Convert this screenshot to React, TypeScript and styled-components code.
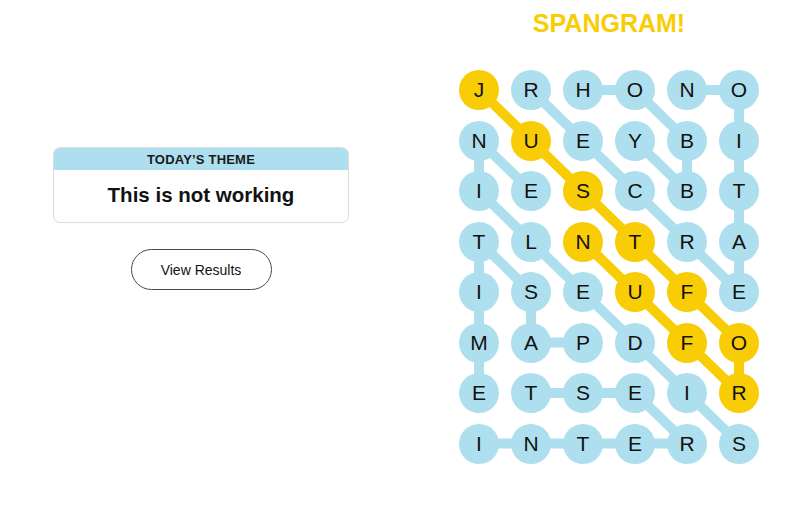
import React from 'react';
import styled, { createGlobalStyle } from 'styled-components';

const GlobalStyle = createGlobalStyle`
  body {
    margin: 0;
    background: #ffffff;
    font-family: "Liberation Sans", Arial, sans-serif;
    color: #121212;
  }
`;

const BLUE = '#aedfee';
const YELLOW = '#f8cd05';

const CELL = 40;
const COL_GAP = 12;
const ROW_GAP = 10.5;

const letters = ['JRHONO', 'NUEYBI', 'IESCBT', 'TLNTRA', 'ISEUFE', 'MAPDFO', 'ETSEIR', 'INTERS'];

type Pos = [number, number];

// words found, as paths of [row, col]
const foundWords: Pos[][] = [
  [[0, 2], [0, 3], [1, 4], [2, 4], [1, 3]],
  [[0, 1], [1, 2], [2, 3], [3, 4], [4, 5], [3, 5], [2, 5], [1, 5], [0, 5], [0, 4]],
  [[5, 2], [5, 1], [4, 1], [3, 0], [4, 0], [5, 0], [6, 0]],
  [[7, 5], [6, 4], [5, 3], [4, 2], [3, 1], [2, 0], [1, 0], [2, 1]],
  [[7, 0], [7, 1], [7, 2], [7, 3], [7, 4], [6, 3], [6, 2], [6, 1]],
];

const spangram: Pos[] = [[0, 0], [1, 1], [2, 2], [3, 3], [4, 4], [5, 5], [6, 5], [5, 4], [4, 3], [3, 2]];

const Page = styled.div`
  display: flex;
  width: 800px;
  height: 505px;
`;

const LeftColumn = styled.div`
  width: 402px;
  padding: 147px 54px 0;
  box-sizing: border-box;
  display: flex;
  flex-direction: column;
  align-items: center;
`;

const ThemeCard = styled.div`
  width: 100%;
  border: 1px solid #dcdcdc;
  border-radius: 7px;
  overflow: hidden;
`;

const ThemeHeader = styled.div`
  height: 22px;
  background: ${BLUE};
  display: flex;
  align-items: center;
  justify-content: center;
  font-size: 13px;
  font-weight: 700;
  letter-spacing: 0.2px;
  color: #1a1a1a;
`;

const ThemeBody = styled.div`
  height: 52px;
  display: flex;
  align-items: center;
  justify-content: center;
  font-size: 20.5px;
  font-weight: 700;
  color: #121212;
  padding-bottom: 2px;
  box-sizing: border-box;
`;

const ResultsButton = styled.button`
  margin-top: 26px;
  width: 141px;
  height: 41px;
  border: 1px solid #4a4a4a;
  border-radius: 21px;
  background: #ffffff;
  font-family: "Liberation Sans", Arial, sans-serif;
  font-size: 14px;
  color: #121212;
  cursor: pointer;
`;

const RightColumn = styled.div`
  flex: 1;
  padding: 8px 0 0 57px;
  display: flex;
  flex-direction: column;
  align-items: flex-start;
`;

const Title = styled.h1`
  width: ${6 * CELL + 5 * COL_GAP}px;
  margin: 0 0 32px;
  text-align: center;
  font-size: 25px;
  line-height: 30px;
  font-weight: 700;
  color: ${YELLOW};
`;

const Board = styled.div`
  position: relative;
  display: grid;
  grid-template-columns: repeat(6, ${CELL}px);
  grid-auto-rows: ${CELL}px;
  column-gap: ${COL_GAP}px;
  row-gap: ${ROW_GAP}px;
`;

const Connectors = styled.svg`
  position: absolute;
  inset: 0;
  width: 100%;
  height: 100%;
  overflow: visible;
  z-index: 0;
`;

const Cell = styled.div<{ $spangram: boolean }>`
  position: relative;
  z-index: 1;
  width: ${CELL}px;
  height: ${CELL}px;
  border-radius: 50%;
  background: ${p => (p.$spangram ? YELLOW : BLUE)};
  display: flex;
  align-items: center;
  justify-content: center;
  font-size: 21px;
  color: #121212;
`;

const center = ([r, c]: Pos) => ({
  x: CELL / 2 + c * (CELL + COL_GAP),
  y: CELL / 2 + r * (CELL + ROW_GAP),
});

const toPoints = (path: Pos[]) =>
  path.map(p => {
    const { x, y } = center(p);
    return `${x},${y}`;
  }).join(' ');

const App: React.FC = () => {
  const isSpangram = (r: number, c: number) => spangram.some(([sr, sc]) => sr === r && sc === c);

  return (
    <Page>
      <GlobalStyle />
      <LeftColumn>
        <ThemeCard>
          <ThemeHeader>TODAY’S THEME</ThemeHeader>
          <ThemeBody>This is not working</ThemeBody>
        </ThemeCard>
        <ResultsButton>View Results</ResultsButton>
      </LeftColumn>
      <RightColumn>
        <Title>SPANGRAM!</Title>
        <Board>
          <Connectors>
            {foundWords.map((w, i) => (
              <polyline key={i} points={toPoints(w)} fill="none" stroke={BLUE} strokeWidth={10} strokeLinejoin="round" />
            ))}
            <polyline points={toPoints(spangram)} fill="none" stroke={YELLOW} strokeWidth={10} strokeLinejoin="round" />
          </Connectors>
          {letters.map((row, r) =>
            row.split('').map((ch, c) => (
              <Cell key={`${r}-${c}`} $spangram={isSpangram(r, c)}>
                {ch}
              </Cell>
            ))
          )}
        </Board>
      </RightColumn>
    </Page>
  );
};

export default App;
